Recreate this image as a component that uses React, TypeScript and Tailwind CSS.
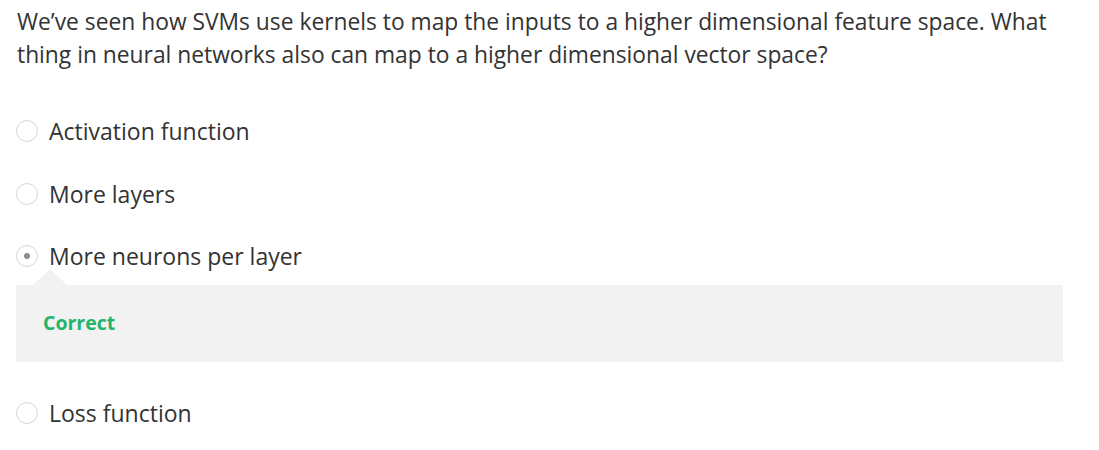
import React from 'react';

const options = [
  { label: 'Activation function', selected: false },
  { label: 'More layers', selected: false },
  { label: 'More neurons per layer', selected: true, feedback: 'Correct' },
  { label: 'Loss function', selected: false },
];

const Radio = ({ checked }: { checked: boolean }) => (
  <span className="flex h-[22px] w-[22px] shrink-0 items-center justify-center rounded-full border border-[#d6d6d6] bg-white">
    {checked && <span className="h-[6px] w-[6px] rounded-full bg-[#8c8c8c]" />}
  </span>
);

export default function App() {
  return (
    <div className="min-h-[450px] bg-white px-[16px] pt-[5px] text-[#333]" style={{ fontFamily: '"Open Sans", sans-serif' }}>
      <p className="pl-px text-[22.8px] leading-[33px]">
        We’ve seen how SVMs use kernels to map the inputs to a higher dimensional feature space. What thing in
        neural networks also can map to a higher dimensional vector space?
      </p>

      <div className="mt-[29px] w-[1047px]">
        {options.map((o) => (
          <div key={o.label}>
            <div className="flex h-[62.5px] items-center gap-[11px]">
              <Radio checked={o.selected} />
              <span className="text-[23px]">{o.label}</span>
            </div>
            {o.feedback && (
              <div className="-mt-[19px] mb-[20px]">
                {/* little arrow pointing up at the chosen answer */}
                <div className="ml-[17px] h-0 w-0 border-x-[17px] border-b-[16px] border-x-transparent border-b-[#f2f2f2]" />
                <div className="flex h-[77px] items-center bg-[#f2f2f2] px-[27px]">
                  <span className="text-[19.5px] font-bold text-[#24b46c]">{o.feedback}</span>
                </div>
              </div>
            )}
          </div>
        ))}
      </div>
    </div>
  );
}
